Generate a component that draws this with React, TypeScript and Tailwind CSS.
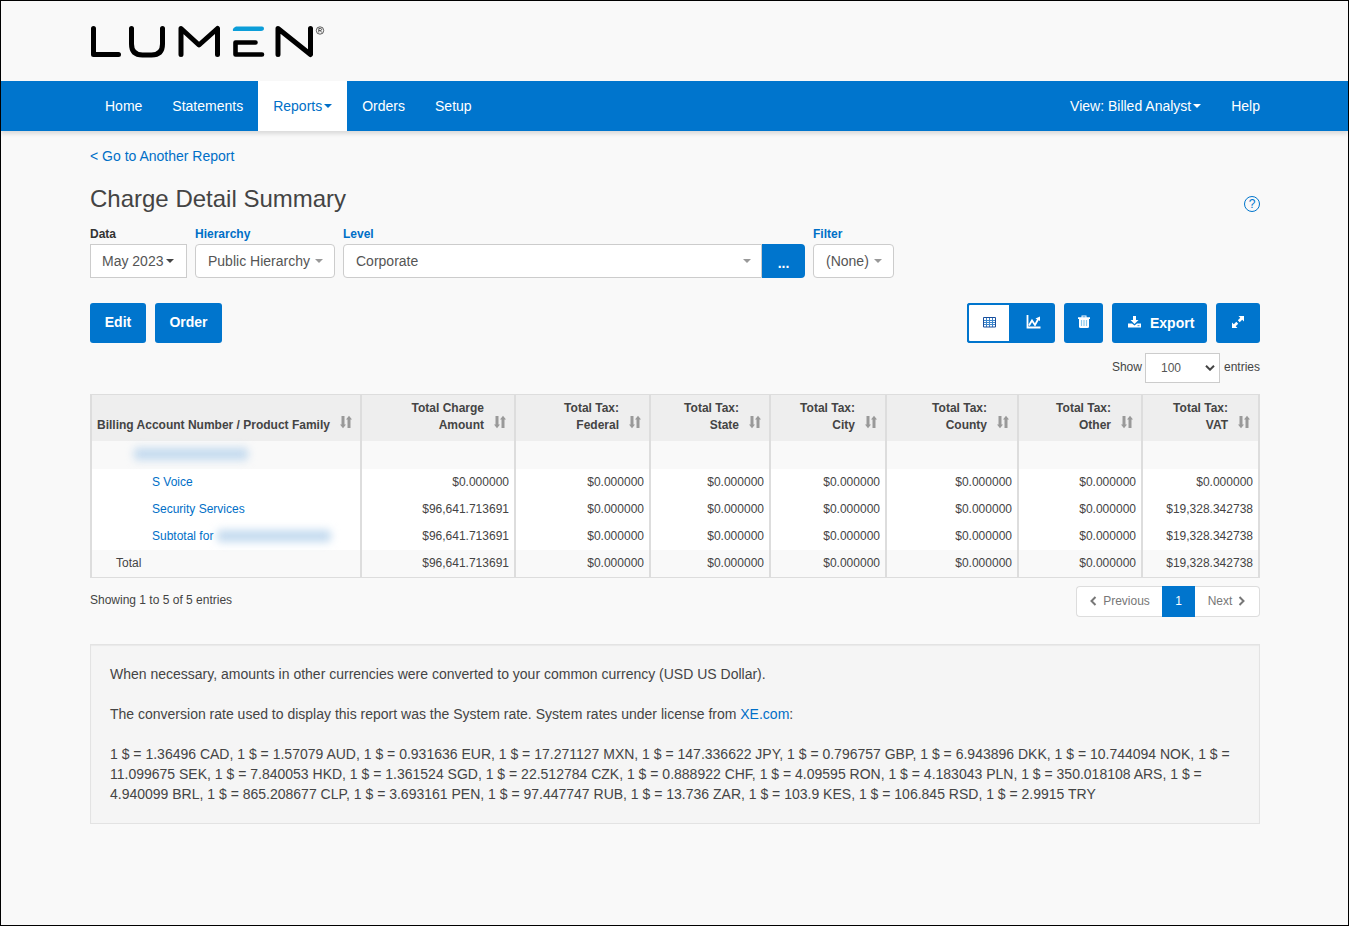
import type { ReactNode } from "react";

const columns = [
  { title: ["Total Charge", "Amount"], width: "w-[154px]" },
  { title: ["Total Tax:", "Federal"], width: "w-[135px]" },
  { title: ["Total Tax:", "State"], width: "w-[120px]" },
  { title: ["Total Tax:", "City"], width: "w-[116px]" },
  { title: ["Total Tax:", "County"], width: "w-[132px]" },
  { title: ["Total Tax:", "Other"], width: "w-[124px]" },
  { title: ["Total Tax:", "VAT"], width: "w-[117px]" },
];

const zero = "$0.000000";

const rows = [
  { label: "S Voice", values: [zero, zero, zero, zero, zero, zero, zero] },
  { label: "Security Services", values: ["$96,641.713691", zero, zero, zero, zero, zero, "$19,328.342738"] },
  { label: "Subtotal for", redacted: true, values: ["$96,641.713691", zero, zero, zero, zero, zero, "$19,328.342738"] },
];

const totals = ["$96,641.713691", zero, zero, zero, zero, zero, "$19,328.342738"];

const Caret = ({ className = "" }: { className?: string }) => (
  <svg viewBox="0 0 8 4" className={`h-1 w-2 fill-current ${className}`} aria-hidden="true">
    <path d="M0 0h8L4 4z" />
  </svg>
);

const Logo = () => (
  <svg viewBox="0 0 236 34" className="h-[34px] w-[236px]" role="img" aria-label="Lumen">
    <g fill="none" stroke="#000" strokeWidth="5" strokeLinecap="round" strokeLinejoin="round">
      <path d="M3.500 3.500V29.500H28.500" />
      <path d="M41.500 3.500V19q0 11 11 11h9q11 0 11-11V3.500" />
      <path d="M91 29.500V3.500L109 20 127.500 3.500V29.500" />
      <path d="M165.500 17.500H145.500V29.500H172" strokeWidth="4.600" />
      <path d="M188 29.500V3.500L220.500 29.500V3.500" />
    </g>
    <path d="M146 1.500h26q2 0 2 2t-3 2.500h-28q-1-3 3-4.500z" fill="#0c9ed9" />
    <circle cx="230" cy="5.500" r="3.700" fill="none" stroke="#333" strokeWidth=".8" />
    <path d="M228.800 7.500V3.500h1.600q1.200 0 1.200 1t-1.200 1h-1.600m1.500 0l1.400 2" fill="none" stroke="#333" strokeWidth=".8" />
  </svg>
);

const SortIcon = () => (
  <svg viewBox="0 0 12 14" className="h-3.5 w-3 shrink-0" fill="#999" aria-hidden="true">
    <path d="M1.500 1h3v8.500h1.500L3 13.300 0 9.500h1.500zM7.500 13h3V4.500H12L9 .7 6 4.500h1.500z" />
  </svg>
);

const TableIcon = () => (
  <svg viewBox="0 0 13 11" className="h-[11px] w-[13px]" fill="none" stroke="#3c86cc" aria-hidden="true">
    <path d="M3.500 1v9M6.500 1v9M9.500 1v9M1 3.500h11M1 5.500h11M1 7.500h11" />
    <path d="M.5.5h12v9.500H.5z" stroke="#1a4f9c" />
  </svg>
);

const ChartIcon = () => (
  <svg viewBox="0 0 15 14" className="h-3.5 w-[15px]" fill="none" stroke="currentColor" aria-hidden="true">
    <path d="M1.500 0v12.500h13" strokeWidth="1.800" />
    <path d="M3 10.500l3-5 3 4.500 3.500-6.500" strokeWidth="1.800" />
    <path d="M9.500 3.500L14 1.500v4.500z" fill="currentColor" strokeWidth="0" />
  </svg>
);

const TrashIcon = () => (
  <svg viewBox="0 0 12 13" className="h-[13px] w-3" aria-hidden="true">
    <path d="M0 2.200h3.500V.5h5v1.700H12V4H0z" fill="#fff" />
    <path d="M1 4h10v7.500q0 1.500-1.500 1.500h-7Q1 13 1 11.500z" fill="#fff" />
    <path d="M3.500 5v6M6 5v6M8.500 5v6" stroke="#8ac8ec" strokeWidth="1.200" />
    <path d="M4.500 1.500h3v.7h-3z" fill="#0075cd" />
  </svg>
);

const DownloadIcon = () => (
  <svg viewBox="0 0 13 12" className="h-3 w-[13px]" fill="currentColor" aria-hidden="true">
    <path d="M5 0h3v4h2.500L6.500 8 2.500 4H5z" />
    <path d="M0 7.500h4l2.500 2 2.500-2h4V11.500H0z" />
    <path d="M9.500 9.700h2" stroke="#0075cd" strokeWidth=".8" />
  </svg>
);

const ExpandIcon = () => (
  <svg viewBox="0 0 12 12" className="size-3" fill="currentColor" aria-hidden="true">
    <path d="M6.500 0H12v5.500L10.200 3.700 7.700 6.200 5.800 4.300 8.300 1.800z" />
    <path d="M5.500 12H0V6.500L1.800 8.300 4.300 5.800 6.200 7.700 3.700 10.200z" />
  </svg>
);

const Chevron = ({ d }: { d: string }) => (
  <svg viewBox="0 0 8 10" className="h-2.5 w-2" fill="none" stroke="currentColor" strokeWidth="2" aria-hidden="true">
    <path d={d} />
  </svg>
);

const Redacted = () => (
  <span className="inline-block h-3 w-[114px] rounded bg-[#c3daef] align-middle blur-[4px]" />
);

interface PickerProps {
  id: string;
  label: string;
  value: string;
  className: string;
  selectClass: string;
  caretClass: string;
  labelClass?: string;
  children?: ReactNode;
}

const Picker = ({ id, label, value, className, selectClass, caretClass, labelClass = "text-[#006fc7]", children }: PickerProps) => (
  <div className={className}>
    <label htmlFor={id} className={`block text-xs leading-5 font-bold ${labelClass}`}>
      {label}
    </label>
    <div className="flex">
      <div className="relative flex-1">
        <select
          id={id}
          className={`block h-[34px] w-full appearance-none border border-[#ccc] bg-white text-sm text-[#555] ${selectClass}`}
        >
          <option>{value}</option>
        </select>
        <Caret className={`pointer-events-none absolute top-[15px] ${caretClass}`} />
      </div>
      {children}
    </div>
  </div>
);

const ValueCells = ({ values }: { values: string[] }) => (
  <>
    {values.map((value, i) => (
      <td key={i} className="border-r-2 border-[#ddd] pr-[5px] pb-0.5 text-right">
        {value}
      </td>
    ))}
  </>
);

const App = () => {
  return (
    <div className="min-h-screen border border-black bg-[#f9f9f9] font-['Liberation_Sans',Arial,sans-serif] text-sm leading-5 text-[#444]">
      <header>
        <div className="mx-auto h-20 max-w-[1171px] pt-6 pl-px">
          <Logo />
        </div>
        <nav className="bg-[#0075cd] text-white shadow-[0_3px_4px_rgba(0,0,0,0.12)]">
          <div className="mx-auto flex max-w-[1171px] justify-between pl-px">
            <div className="flex">
              <a href="#home" className="p-[15px]">Home</a>
              <a href="#statements" className="p-[15px]">Statements</a>
              <a href="#reports" className="flex items-center gap-0.5 bg-white p-[15px] text-[#006fc7]">
                Reports
                <Caret />
              </a>
              <a href="#orders" className="p-[15px]">Orders</a>
              <a href="#setup" className="p-[15px]">Setup</a>
            </div>
            <div className="flex">
              <a href="#view" className="flex items-center gap-0.5 p-[15px]">
                View: Billed Analyst
                <Caret />
              </a>
              <a href="#help" className="py-[15px] pl-[15px]">Help</a>
            </div>
          </div>
        </nav>
      </header>

      <main className="mx-auto max-w-[1171px] pt-[15px] pb-[100px] pl-px">
        <a href="#reports" className="text-[#006fc7]">&lt; Go to Another Report</a>

        <div className="mt-[19px] flex items-center justify-between">
          <h1 className="text-2xl leading-7">Charge Detail Summary</h1>
          <button type="button" aria-label="Help" className="mt-2.5 flex size-4 items-center justify-center rounded-full border border-[#0075cd] text-xs text-[#0075cd]">
            ?
          </button>
        </div>

        <div className="mt-[11px] flex gap-2">
          <Picker id="data" label="Data" value="May 2023" className="w-[97px]" selectClass="pl-[11px]" caretClass="right-[13px] text-[#444]" labelClass="text-[#333]" />
          <Picker id="hierarchy" label="Hierarchy" value="Public Hierarchy" className="w-[140px]" selectClass="rounded pl-3" caretClass="right-3 text-[#999]" />
          <Picker id="level" label="Level" value="Corporate" className="w-[462px]" selectClass="rounded-l pl-3" caretClass="right-[11px] text-[#999]">
            <button type="button" className="w-[43px] rounded-r bg-[#0075cd] pt-1 font-bold text-white">...</button>
          </Picker>
          <Picker id="filter" label="Filter" value="(None)" className="w-[81px]" selectClass="rounded pl-3" caretClass="right-3 text-[#999]" />
        </div>

        <div className="mt-[25px] flex justify-between">
          <div className="flex gap-[9px]">
            <button type="button" className="h-10 w-14 rounded-[3px] bg-[#0075cd] pb-0.5 font-bold text-white">Edit</button>
            <button type="button" className="h-10 w-[67px] rounded-[3px] bg-[#0075cd] pb-0.5 font-bold text-white">Order</button>
          </div>
          <div className="flex gap-[9px] text-white">
            <div className="flex h-10 rounded-[3px] bg-[#0075cd]">
              <button type="button" aria-label="Table view" className="flex w-11 items-center justify-center rounded-l-[3px] border-2 border-[#0075cd] bg-white pb-0.5">
                <TableIcon />
              </button>
              <button type="button" aria-label="Chart view" className="flex w-11 items-center justify-center pb-0.5">
                <ChartIcon />
              </button>
            </div>
            <button type="button" aria-label="Delete" className="flex h-10 w-[39px] items-center justify-center rounded-[3px] bg-[#0075cd] pb-[3px]">
              <TrashIcon />
            </button>
            <button type="button" className="flex h-10 w-[95px] items-center gap-[9px] rounded-[3px] bg-[#0075cd] pl-4 font-bold">
              <span className="pb-0.5">
                <DownloadIcon />
              </span>
              Export
            </button>
            <button type="button" aria-label="Full screen" className="flex h-10 w-11 items-center justify-center rounded-[3px] bg-[#0075cd] pb-0.5">
              <ExpandIcon />
            </button>
          </div>
        </div>

        <div className="mt-2.5 flex justify-end text-xs leading-7">
          <label htmlFor="entries" className="mr-[3px]">Show</label>
          <div className="relative">
            <select id="entries" className="h-[30px] w-[75px] appearance-none border border-[#ccc] bg-white pl-[15px] text-xs text-[#555]">
              <option>100</option>
            </select>
            <svg viewBox="0 0 10 6" className="pointer-events-none absolute top-3 right-[5px] h-1.5 w-2.5" fill="none" stroke="#444" strokeWidth="2" aria-hidden="true">
              <path d="M1 .7l4 4 4-4" />
            </svg>
          </div>
          <span className="ml-1">entries</span>
        </div>

        <table className="mt-[11px] w-full table-fixed border-separate border-spacing-0 border-y border-l-2 border-[#ddd] text-xs">
          <thead className="bg-[#eee]">
            <tr className="h-[46px]">
              <th scope="col" className="w-[270px] border-r-2 border-[#ddd] pr-2 pb-[7px] pl-[5px] align-bottom">
                <div className="flex items-end justify-between leading-[17px]">
                  Billing Account Number / Product Family
                  <button type="button" aria-label="Sort" className="pb-[5px]">
                    <SortIcon />
                  </button>
                </div>
              </th>
              {columns.map(({ title, width }) => (
                <th key={title[1]} scope="col" className={`${width} border-r-2 border-[#ddd] pr-2 pb-[7px] align-bottom`}>
                  <div className="flex items-end justify-end gap-2.5 text-right leading-[17px]">
                    <span>
                      {title[0]}
                      <br />
                      {title[1]}
                    </span>
                    <button type="button" aria-label="Sort" className="pb-[5px]">
                      <SortIcon />
                    </button>
                  </div>
                </th>
              ))}
            </tr>
          </thead>
          <tbody>
            <tr className="h-7">
              <td className="border-r-2 border-[#ddd] pb-1 pl-[42px]">
                <Redacted />
              </td>
              <ValueCells values={["", "", "", "", "", "", ""]} />
            </tr>
            {rows.map((row) => (
              <tr key={row.label} className="h-[27px] bg-white">
                <td className="border-r-2 border-[#ddd] pb-0.5 pl-[60px]">
                  <a href="#detail" className="text-[#006fc7]">{row.label}</a> {row.redacted && <Redacted />}
                </td>
                <ValueCells values={row.values} />
              </tr>
            ))}
            <tr className="h-[27px]">
              <td className="border-r-2 border-[#ddd] pb-0.5 pl-6">Total</td>
              <ValueCells values={totals} />
            </tr>
          </tbody>
        </table>

        <div className="mt-2 flex justify-between text-xs">
          <p className="leading-7">Showing 1 to 5 of 5 entries</p>
          <div className="flex h-[31px] text-[#777]">
            <button type="button" className="flex w-[86px] items-center justify-center gap-1.5 rounded-l border border-r-0 border-[#ddd] bg-white pb-0.5">
              <Chevron d="M6.500 1l-4 4 4 4" />
              Previous
            </button>
            <button type="button" className="w-[33px] bg-[#0075cd] pb-0.5 text-white">1</button>
            <button type="button" className="flex w-[65px] items-center justify-center gap-1.5 rounded-r border border-l-0 border-[#ddd] bg-white pb-0.5">
              Next
              <Chevron d="M1.500 1l4 4-4 4" />
            </button>
          </div>
        </div>

        <section className="mt-[27px] space-y-5 border border-[#e3e3e3] bg-[#f5f5f5] p-[19px] shadow-[inset_0_1px_1px_rgba(0,0,0,0.05)]">
          <p>When necessary, amounts in other currencies were converted to your common currency (USD US Dollar).</p>
          <p>
            The conversion rate used to display this report was the System rate. System rates under license from{" "}
            <a href="#xe" className="text-[#006fc7]">XE.com</a>:
          </p>
          <p>
            1 $ = 1.36496 CAD, 1 $ = 1.57079 AUD, 1 $ = 0.931636 EUR, 1 $ = 17.271127 MXN, 1 $ = 147.336622 JPY, 1 $ = 0.796757 GBP, 1 $ = 6.943896 DKK, 1 $ = 10.744094 NOK, 1 $ = 11.099675 SEK, 1 $ = 7.840053 HKD, 1 $ = 1.361524 SGD, 1 $ = 22.512784 CZK, 1 $ = 0.888922 CHF, 1 $ = 4.09595 RON, 1 $ = 4.183043 PLN, 1 $ = 350.018108 ARS, 1 $ = 4.940099 BRL, 1 $ = 865.208677 CLP, 1 $ = 3.693161 PEN, 1 $ = 97.447747 RUB, 1 $ = 13.736 ZAR, 1 $ = 103.9 KES, 1 $ = 106.845 RSD, 1 $ = 2.9915 TRY
          </p>
        </section>
      </main>
    </div>
  );
};

export default App;
